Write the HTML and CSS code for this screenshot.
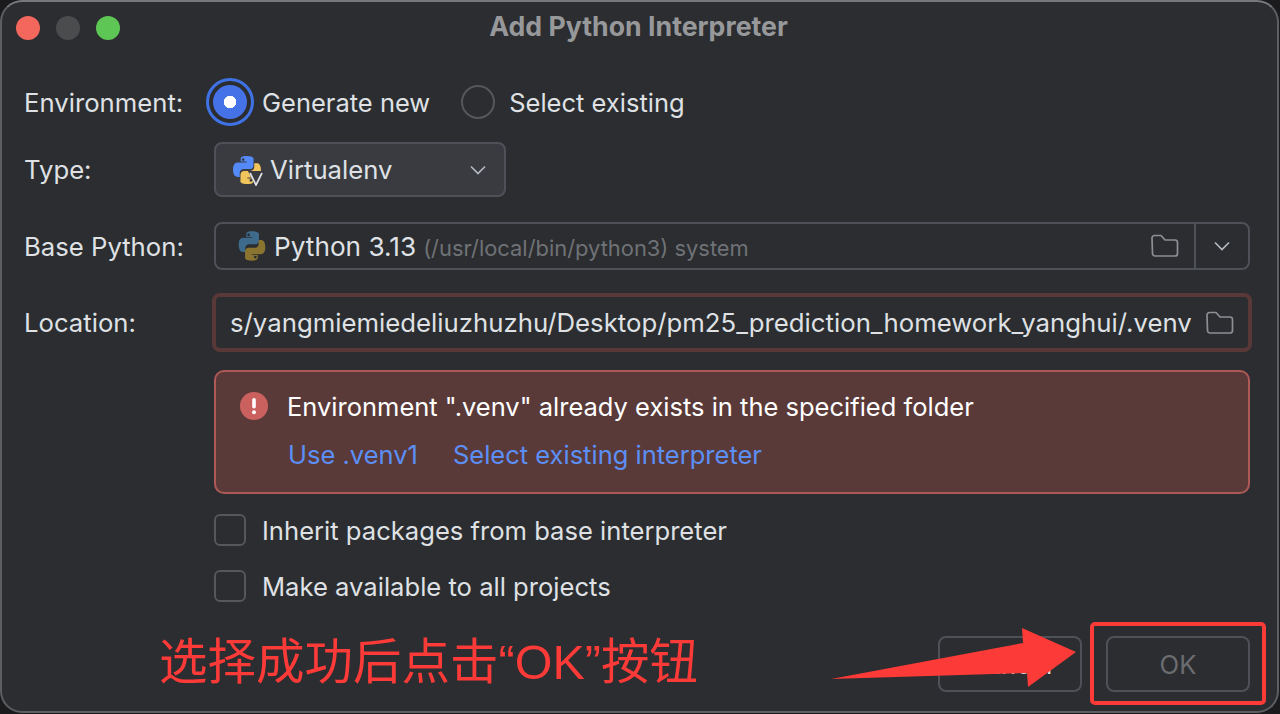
FILE: index.html
```html
<!DOCTYPE html>
<html>
<head>
  <meta charset="utf-8">
  <link rel="stylesheet" href="styles.css">
</head>
<body>
  <svg class="defs" width="0" height="0">
    <defs>
      <path id="py-top" fill-rule="evenodd" d="M11.900 1C7.400 1 7.700 3 7.700 3v2.200h4.400v.7H5.600S2 5.500 2 11.100c0 5.600 3.100 5.400 3.100 5.400H7v-2.700s-.1-3.100 3.100-3.100h4.100s3 .1 3-2.900V3.900S18.600 1 11.900 1zM9.500 2.700a1 1 0 110 2 1 1 0 010-2z"/>
      <path id="folder" fill="none" stroke="#8c8f94" stroke-width="1.700" stroke-linejoin="round" d="M1 4a2.500 2.500 0 012.500-2.500h6.500l4 4.500h10a2.500 2.500 0 012.500 2.500v11a2.500 2.500 0 01-2.500 2.500h-20a2.500 2.500 0 01-2.500-2.500z"/>
    </defs>
  </svg>

  <div class="dialog">
    <div class="titlebar">
      <div class="lights">
        <span class="light red"></span>
        <span class="light gray"></span>
        <span class="light green"></span>
      </div>
      <div class="title">Add Python Interpreter</div>
    </div>

    <div class="row env-row">
      <div class="label">Environment:</div>
      <div class="radio-on"><span></span></div>
      <div class="option">Generate new</div>
      <div class="radio-off"></div>
      <div class="option">Select existing</div>
    </div>

    <div class="row type-row">
      <div class="label">Type:</div>
      <div class="combo">
        <svg class="venv-icon" width="34" height="32" viewBox="0 0 34 32">
          <use href="#py-top" fill="#548af7" transform="translate(-2.700 .6) scale(1.350)"/>
          <use href="#py-top" fill="#f2c55c" transform="rotate(180 14 16) translate(-2.700 .6) scale(1.350)"/>
          <path d="M15 17h16l-7 15h-2z" fill="#393b40"/>
          <path d="M17 19l6 12 6-12" fill="none" stroke="#dfe1e5" stroke-width="1.700"/>
        </svg>
        <span>Virtualenv</span>
        <svg class="chevron" width="18" height="10" viewBox="0 0 18 10"><path d="M2 1.500l7 7 7-7" fill="none" stroke="#b4b8bf" stroke-width="1.700"/></svg>
      </div>
    </div>

    <div class="row base-row">
      <div class="label">Base Python:</div>
      <div class="field">
        <svg class="py-icon" width="32" height="32" viewBox="0 0 24 24">
          <use href="#py-top" fill="#3e6a8c"/>
          <use href="#py-top" fill="#8a7430" transform="rotate(180 12 12)"/>
        </svg>
        <span class="py-name">Python 3.13</span>
        <span class="py-path">(/usr/local/bin/python3) system</span>
        <svg class="folder" width="28" height="24" viewBox="0 0 28 24"><use href="#folder"/></svg>
        <div class="field-drop">
          <svg width="18" height="10" viewBox="0 0 18 10"><path d="M2 1.500l7 7 7-7" fill="none" stroke="#b4b8bf" stroke-width="1.700"/></svg>
        </div>
      </div>
    </div>

    <div class="row loc-row">
      <div class="label">Location:</div>
      <div class="loc-field">
        <span>s/yangmiemiedeliuzhuzhu/Desktop/pm25_prediction_homework_yanghui/.venv</span>
        <svg class="folder" width="28" height="24" viewBox="0 0 28 24"><use href="#folder"/></svg>
      </div>
    </div>

    <div class="error-box">
      <div class="error-line">
        <svg width="28" height="28" viewBox="0 0 28 28">
          <circle cx="14" cy="14" r="14" fill="#cb615e"/>
          <rect x="12.200" y="6" width="3.600" height="10.500" rx="1.800" fill="#fff"/>
          <circle cx="14" cy="20.300" r="2" fill="#fff"/>
        </svg>
        <span>Environment ".venv" already exists in the specified folder</span>
      </div>
      <div class="error-links">
        <a>Use .venv1</a>
        <a>Select existing interpreter</a>
      </div>
    </div>

    <div class="check-row first"><span class="check"></span>Inherit packages from base interpreter</div>
    <div class="check-row"><span class="check"></span>Make available to all projects</div>

    <div class="footer">
      <div class="btn cancel">Cancel</div>
      <div class="btn ok">OK</div>
    </div>
  </div>

  <!-- annotation drawn over the screenshot -->
  <div class="note">选择成功后点击“OK”按钮</div>
  <div class="note-box"></div>
  <svg class="note-arrow" width="1280" height="714" viewBox="0 0 1280 714">
    <polygon points="831,679 1023,643 1022,628 1076,652 1028,687 1027,673" fill="#fc3a38"/>
  </svg>
</body>
</html>
```

FILE: styles.css
```css
* {
  box-sizing: border-box;
}

html, body {
  margin: 0;
  height: 714px;
  overflow: hidden;
}

body {
  background: #1b1b1d;
  font-family: Inter, "Noto Sans", sans-serif;
  font-size: 25.7px;
  color: #dfe1e5;
}

.defs {
  display: block;
  height: 0;
}

.dialog {
  width: 1279px;
  height: 713px;
  background: #2b2d30;
  border: 2px solid #5d5e61;
  border-top-color: #77787b;
  border-radius: 22px;
  padding: 0 27px 0 22px;
}

.titlebar {
  display: flex;
  align-items: center;
  justify-content: center;
  height: 50px;
  position: relative;
}

.lights {
  position: absolute;
  left: -8px;
  top: 14px;
  display: flex;
  gap: 16px;
}

.light {
  width: 24px;
  height: 24px;
  border-radius: 50%;
}

.light.red { background: #f3675c; }
.light.gray { background: #4b4c4e; }
.light.green { background: #5ec655; }

.title {
  font-size: 26.7px;
  font-weight: 700;
  color: #97989a;
  margin-left: 3px;
  margin-bottom: 2px;
}

.row {
  display: flex;
  align-items: center;
}

.label {
  width: 190px;
  flex: none;
}

.env-row {
  height: 48px;
  margin-top: 26px;
}

.radio-on {
  width: 48px;
  height: 48px;
  margin-left: -8px;
  border-radius: 50%;
  border: 3px solid #3f72e5;
  padding: 4px;
  flex: none;
}

.radio-on span {
  display: flex;
  width: 100%;
  height: 100%;
  border-radius: 50%;
  background: radial-gradient(circle, #fff 0 6px, #4672e8 6.500px);
}

.option {
  margin-left: 8px;
  font-size: 25.5px;
}

.radio-off {
  width: 34px;
  height: 34px;
  margin-left: 31px;
  margin-right: 6px;
  border-radius: 50%;
  border: 2px solid #55575b;
  flex: none;
}

.type-row {
  margin-top: 16px;
}

.combo {
  width: 292px;
  height: 55px;
  background: #393b40;
  border: 2px solid #4e5157;
  border-radius: 8px;
  display: flex;
  align-items: center;
  padding-left: 17px;
}

.venv-icon {
  margin-right: 3px;
}

.chevron {
  margin-left: auto;
  margin-right: 17px;
}

.base-row {
  margin-top: 25px;
}

.field {
  flex: 1;
  height: 48px;
  border: 2px solid #4e5157;
  border-radius: 8px;
  display: flex;
  align-items: center;
  padding-left: 20px;
}

.py-name {
  margin-left: 6px;
  font-size: 26.2px;
}

.py-path {
  margin-left: 7px;
  padding-top: 4px;
  font-size: 21.9px;
  color: #6f7276;
}

.field .folder {
  margin-left: auto;
  margin-right: 15px;
}

.field-drop {
  width: 54px;
  height: 100%;
  border-left: 2px solid #4e5157;
  display: flex;
  align-items: center;
  justify-content: center;
}

.loc-row {
  margin-top: 23px;
  margin-right: -2px;
}

.loc-row .label {
  width: 188px;
}

.loc-field {
  flex: 1;
  height: 59px;
  border: 4px solid #593937;
  border-radius: 8px;
  display: flex;
  align-items: center;
  justify-content: space-between;
  padding: 0 14px;
  font-size: 25.75px;
}

.error-box {
  margin: 18px 0 0 190px;
  height: 124px;
  background: #5a3a39;
  border: 2px solid #ae5955;
  border-radius: 10px;
  padding: 19px 24px;
  color: #fff;
  font-size: 25.5px;
}

.error-line {
  display: flex;
  align-items: center;
  gap: 19px;
  height: 30px;
}

.error-links {
  display: flex;
  gap: 35px;
  margin-top: 18px;
  margin-left: 48px;
  color: #5c8ff5;
}

.check-row {
  display: flex;
  align-items: center;
  gap: 16px;
  margin: 26px 0 0 190px;
  height: 30px;
  font-size: 25.6px;
}

.check-row.first {
  margin-top: 21px;
}

.check {
  width: 32px;
  height: 32px;
  border: 2px solid #55575b;
  border-radius: 6px;
  flex: none;
}

.footer {
  display: flex;
  justify-content: flex-end;
  gap: 24px;
  margin-top: 35px;
}

.btn {
  width: 144px;
  height: 56px;
  border: 2px solid #4e5157;
  border-radius: 8px;
  display: flex;
  align-items: center;
  justify-content: center;
}

.btn.ok {
  color: #6a6c70;
}

.note {
  position: absolute;
  left: 159px;
  top: 630px;
  font-family: "Liberation Sans", "Noto Sans CJK SC", sans-serif;
  font-size: 48.5px;
  line-height: 64px;
  color: #fc3a38;
  white-space: nowrap;
}

.note-box {
  position: absolute;
  left: 1090px;
  top: 622px;
  width: 176px;
  height: 83px;
  border: 4px solid #fc3a38;
  border-radius: 5px;
}

.note-arrow {
  position: absolute;
  left: 0;
  top: 0;
}
```
